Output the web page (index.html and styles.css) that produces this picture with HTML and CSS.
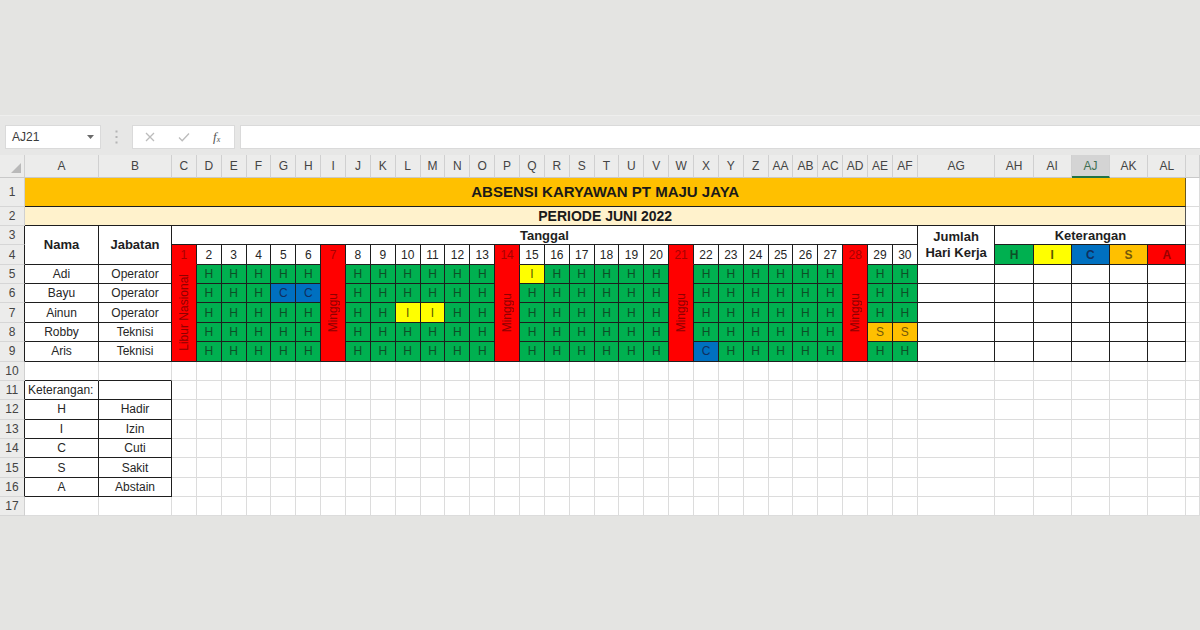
FILE: index.html
```html
<!DOCTYPE html>
<html lang="id">
<head>
<meta charset="utf-8">
<title>Absensi Karyawan PT Maju Jaya</title>
<link rel="stylesheet" href="styles.css">
</head>
<body>
<div class="app">
  <div class="toolbar">
    <div class="namebox"><span>AJ21</span><svg width="7" height="4" viewBox="0 0 7 4"><polygon points="0,0 7,0 3.5,4" fill="#6a6a6a"/></svg></div>
    <div class="grip"><svg width="3" height="14" viewBox="0 0 3 14"><rect x="0.5" y="0.5" width="2" height="2" fill="#b4b4b4"/><rect x="0.5" y="6" width="2" height="2" fill="#b4b4b4"/><rect x="0.5" y="11.5" width="2" height="2" fill="#b4b4b4"/></svg></div>
    <div class="fxbox">
      <span class="ico"><svg width="10" height="10" viewBox="0 0 10 10"><path d="M1 1 L9 9 M9 1 L1 9" stroke="#bcbcbc" stroke-width="1.3" fill="none"/></svg></span>
      <span class="ico"><svg width="12" height="10" viewBox="0 0 12 10"><path d="M1 5.5 L4.2 8.7 L11 1.5" stroke="#bcbcbc" stroke-width="1.3" fill="none"/></svg></span>
      <span class="fx">f<sub>x</sub></span>
    </div>
    <div class="formula"></div>
  </div>

  <div class="s">
    <!-- column headers -->
    <div class="ch corner"><svg width="10" height="10" viewBox="0 0 10 10"><polygon points="10,0 10,10 0,10" fill="#b9b9b9"/></svg></div>
    <div class="ch">A</div><div class="ch">B</div><div class="ch">C</div><div class="ch">D</div><div class="ch">E</div><div class="ch">F</div><div class="ch">G</div><div class="ch">H</div><div class="ch">I</div><div class="ch">J</div><div class="ch">K</div><div class="ch">L</div><div class="ch">M</div><div class="ch">N</div><div class="ch">O</div><div class="ch">P</div><div class="ch">Q</div><div class="ch">R</div><div class="ch">S</div><div class="ch">T</div><div class="ch">U</div><div class="ch">V</div><div class="ch">W</div><div class="ch">X</div><div class="ch">Y</div><div class="ch">Z</div><div class="ch">AA</div><div class="ch">AB</div><div class="ch">AC</div><div class="ch">AD</div><div class="ch">AE</div><div class="ch">AF</div><div class="ch">AG</div><div class="ch">AH</div><div class="ch">AI</div><div class="ch sel">AJ</div><div class="ch">AK</div><div class="ch">AL</div><div class="ch"></div>

    <!-- row 1 -->
    <div class="rh">1</div><div class="t1">ABSENSI KARYAWAN PT MAJU JAYA</div><div></div>
    <!-- row 2 -->
    <div class="rh">2</div><div class="t2">PERIODE JUNI 2022</div><div></div>
    <!-- row 3 -->
    <div class="rh rb">3</div>
    <div class="b r2 hd">Nama</div>
    <div class="b r2 hd">Jabatan</div>
    <div class="b c30 hd">Tanggal</div>
    <div class="b r2 hd two">Jumlah<br>Hari Kerja</div>
    <div class="b c5 hd">Keterangan</div>
    <div></div>
    <!-- row 4 -->
    <div class="rh rb">4</div>
    <div class="b rdd">1</div><div class="b">2</div><div class="b">3</div><div class="b">4</div><div class="b">5</div><div class="b">6</div><div class="b rdd">7</div><div class="b">8</div><div class="b">9</div><div class="b">10</div><div class="b">11</div><div class="b">12</div><div class="b">13</div><div class="b rdd">14</div><div class="b">15</div><div class="b">16</div><div class="b">17</div><div class="b">18</div><div class="b">19</div><div class="b">20</div><div class="b rdd">21</div><div class="b">22</div><div class="b">23</div><div class="b">24</div><div class="b">25</div><div class="b">26</div><div class="b">27</div><div class="b rdd">28</div><div class="b">29</div><div class="b">30</div>
    <div class="b g k">H</div><div class="b y k">I</div><div class="b bl k">C</div><div class="b o k">S</div><div class="b rd k">A</div>
    <div></div>

    <!-- row 5 -->
    <div class="rh rb">5</div><div class="b">Adi</div><div class="b">Operator</div>
    <div class="b mg"><span>Libur Nasional</span></div>
    <div class="b g">H</div><div class="b g">H</div><div class="b g">H</div><div class="b g">H</div><div class="b g">H</div>
    <div class="b mg"><span>Minggu</span></div>
    <div class="b g">H</div><div class="b g">H</div><div class="b g">H</div><div class="b g">H</div><div class="b g">H</div><div class="b g">H</div>
    <div class="b mg"><span>Minggu</span></div>
    <div class="b y">I</div><div class="b g">H</div><div class="b g">H</div><div class="b g">H</div><div class="b g">H</div><div class="b g">H</div>
    <div class="b mg"><span>Minggu</span></div>
    <div class="b g">H</div><div class="b g">H</div><div class="b g">H</div><div class="b g">H</div><div class="b g">H</div><div class="b g">H</div>
    <div class="b mg"><span>Minggu</span></div>
    <div class="b g">H</div><div class="b g">H</div>
    <div class="b"></div><div class="b"></div><div class="b"></div><div class="b"></div><div class="b"></div><div class="b"></div>
    <div></div>

    <!-- row 6 -->
    <div class="rh rb">6</div><div class="b">Bayu</div><div class="b">Operator</div>
    <div class="b g">H</div><div class="b g">H</div><div class="b g">H</div><div class="b bl">C</div><div class="b bl">C</div>
    <div class="b g">H</div><div class="b g">H</div><div class="b g">H</div><div class="b g">H</div><div class="b g">H</div><div class="b g">H</div>
    <div class="b g">H</div><div class="b g">H</div><div class="b g">H</div><div class="b g">H</div><div class="b g">H</div><div class="b g">H</div>
    <div class="b g">H</div><div class="b g">H</div><div class="b g">H</div><div class="b g">H</div><div class="b g">H</div><div class="b g">H</div>
    <div class="b g">H</div><div class="b g">H</div>
    <div class="b"></div><div class="b"></div><div class="b"></div><div class="b"></div><div class="b"></div><div class="b"></div>
    <div></div>

    <!-- row 7 -->
    <div class="rh rb">7</div><div class="b">Ainun</div><div class="b">Operator</div>
    <div class="b g">H</div><div class="b g">H</div><div class="b g">H</div><div class="b g">H</div><div class="b g">H</div>
    <div class="b g">H</div><div class="b g">H</div><div class="b y">I</div><div class="b y">I</div><div class="b g">H</div><div class="b g">H</div>
    <div class="b g">H</div><div class="b g">H</div><div class="b g">H</div><div class="b g">H</div><div class="b g">H</div><div class="b g">H</div>
    <div class="b g">H</div><div class="b g">H</div><div class="b g">H</div><div class="b g">H</div><div class="b g">H</div><div class="b g">H</div>
    <div class="b g">H</div><div class="b g">H</div>
    <div class="b"></div><div class="b"></div><div class="b"></div><div class="b"></div><div class="b"></div><div class="b"></div>
    <div></div>

    <!-- row 8 -->
    <div class="rh rb">8</div><div class="b">Robby</div><div class="b">Teknisi</div>
    <div class="b g">H</div><div class="b g">H</div><div class="b g">H</div><div class="b g">H</div><div class="b g">H</div>
    <div class="b g">H</div><div class="b g">H</div><div class="b g">H</div><div class="b g">H</div><div class="b g">H</div><div class="b g">H</div>
    <div class="b g">H</div><div class="b g">H</div><div class="b g">H</div><div class="b g">H</div><div class="b g">H</div><div class="b g">H</div>
    <div class="b g">H</div><div class="b g">H</div><div class="b g">H</div><div class="b g">H</div><div class="b g">H</div><div class="b g">H</div>
    <div class="b o">S</div><div class="b o">S</div>
    <div class="b"></div><div class="b"></div><div class="b"></div><div class="b"></div><div class="b"></div><div class="b"></div>
    <div></div>

    <!-- row 9 -->
    <div class="rh rb">9</div><div class="b">Aris</div><div class="b">Teknisi</div>
    <div class="b g">H</div><div class="b g">H</div><div class="b g">H</div><div class="b g">H</div><div class="b g">H</div>
    <div class="b g">H</div><div class="b g">H</div><div class="b g">H</div><div class="b g">H</div><div class="b g">H</div><div class="b g">H</div>
    <div class="b g">H</div><div class="b g">H</div><div class="b g">H</div><div class="b g">H</div><div class="b g">H</div><div class="b g">H</div>
    <div class="b bl">C</div><div class="b g">H</div><div class="b g">H</div><div class="b g">H</div><div class="b g">H</div><div class="b g">H</div>
    <div class="b g">H</div><div class="b g">H</div>
    <div class="b"></div><div class="b"></div><div class="b"></div><div class="b"></div><div class="b"></div><div class="b"></div>
    <div></div>

    <!-- row 10 -->
    <div class="rh">10</div><div class="bb"></div><div class="bb"></div>
    <div></div><div></div><div></div><div></div><div></div><div></div><div></div><div></div><div></div><div></div>
    <div></div><div></div><div></div><div></div><div></div><div></div><div></div><div></div><div></div><div></div>
    <div></div><div></div><div></div><div></div><div></div><div></div><div></div><div></div><div></div><div></div>
    <div></div><div></div><div></div><div></div><div></div><div></div><div></div>

    <!-- row 11 -->
    <div class="rh rb">11</div><div class="b l">Keterangan:</div><div class="b"></div>
    <div></div><div></div><div></div><div></div><div></div><div></div><div></div><div></div><div></div><div></div>
    <div></div><div></div><div></div><div></div><div></div><div></div><div></div><div></div><div></div><div></div>
    <div></div><div></div><div></div><div></div><div></div><div></div><div></div><div></div><div></div><div></div>
    <div></div><div></div><div></div><div></div><div></div><div></div><div></div>

    <!-- row 12 -->
    <div class="rh rb">12</div><div class="b">H</div><div class="b">Hadir</div>
    <div></div><div></div><div></div><div></div><div></div><div></div><div></div><div></div><div></div><div></div>
    <div></div><div></div><div></div><div></div><div></div><div></div><div></div><div></div><div></div><div></div>
    <div></div><div></div><div></div><div></div><div></div><div></div><div></div><div></div><div></div><div></div>
    <div></div><div></div><div></div><div></div><div></div><div></div><div></div>

    <!-- row 13 -->
    <div class="rh rb">13</div><div class="b">I</div><div class="b">Izin</div>
    <div></div><div></div><div></div><div></div><div></div><div></div><div></div><div></div><div></div><div></div>
    <div></div><div></div><div></div><div></div><div></div><div></div><div></div><div></div><div></div><div></div>
    <div></div><div></div><div></div><div></div><div></div><div></div><div></div><div></div><div></div><div></div>
    <div></div><div></div><div></div><div></div><div></div><div></div><div></div>

    <!-- row 14 -->
    <div class="rh rb">14</div><div class="b">C</div><div class="b">Cuti</div>
    <div></div><div></div><div></div><div></div><div></div><div></div><div></div><div></div><div></div><div></div>
    <div></div><div></div><div></div><div></div><div></div><div></div><div></div><div></div><div></div><div></div>
    <div></div><div></div><div></div><div></div><div></div><div></div><div></div><div></div><div></div><div></div>
    <div></div><div></div><div></div><div></div><div></div><div></div><div></div>

    <!-- row 15 -->
    <div class="rh rb">15</div><div class="b">S</div><div class="b">Sakit</div>
    <div></div><div></div><div></div><div></div><div></div><div></div><div></div><div></div><div></div><div></div>
    <div></div><div></div><div></div><div></div><div></div><div></div><div></div><div></div><div></div><div></div>
    <div></div><div></div><div></div><div></div><div></div><div></div><div></div><div></div><div></div><div></div>
    <div></div><div></div><div></div><div></div><div></div><div></div><div></div>

    <!-- row 16 -->
    <div class="rh rb">16</div><div class="b">A</div><div class="b">Abstain</div>
    <div></div><div></div><div></div><div></div><div></div><div></div><div></div><div></div><div></div><div></div>
    <div></div><div></div><div></div><div></div><div></div><div></div><div></div><div></div><div></div><div></div>
    <div></div><div></div><div></div><div></div><div></div><div></div><div></div><div></div><div></div><div></div>
    <div></div><div></div><div></div><div></div><div></div><div></div><div></div>

    <!-- row 17 -->
    <div class="rh">17</div><div></div><div></div>
    <div></div><div></div><div></div><div></div><div></div><div></div><div></div><div></div><div></div><div></div>
    <div></div><div></div><div></div><div></div><div></div><div></div><div></div><div></div><div></div><div></div>
    <div></div><div></div><div></div><div></div><div></div><div></div><div></div><div></div><div></div><div></div>
    <div></div><div></div><div></div><div></div><div></div><div></div><div></div>
  </div>
</div>
</body>
</html>
```

FILE: styles.css
```css
* { box-sizing: border-box; margin: 0; padding: 0; }
html, body { width: 1200px; height: 630px; overflow: hidden; }
body {
  background: #e4e4e2;
  font-family: "Liberation Sans", Arial, sans-serif;
  color: #222;
}
.app { padding-top: 115px; }

/* formula bar */
.toolbar {
  height: 40px;
  display: flex;
  align-items: flex-start;
  padding: 9px 0 0 5px;
  background: #e7e7e6;
  border-top: 1px solid #eeeeed;
}
.namebox {
  width: 96px; height: 24px;
  background: #fff;
  border: 1px solid #dadada;
  display: flex; align-items: center; justify-content: space-between;
  padding: 0 6px 0 6px;
  font-size: 12px; color: #3a3a3a;
}
.grip { width: 31px; height: 24px; display: flex; align-items: center; justify-content: center; }
.fxbox {
  width: 103px; height: 24px;
  background: #fff;
  border: 1px solid #dadada;
  display: flex; align-items: center;
  padding-left: 12px;
}
.ico { width: 33px; display: flex; align-items: center; }
.fx {
  font-family: "Liberation Serif", serif;
  font-style: italic;
  font-size: 13px;
  color: #555;
  margin-left: 2px;
}
.fx sub { font-size: 8px; vertical-align: -1px; }
.formula {
  flex: 1; height: 24px;
  margin-left: 5px;
  background: #fff;
  border: 1px solid #dadada;
  border-right: 0;
}

/* sheet grid */
.s {
  display: grid;
  grid-template-columns: 25px 74px 73px repeat(30, 24.867px) 77.7px repeat(5, 38.2px) 1fr;
  grid-template-rows: 23px 28.7px repeat(16, 19.37px);
  background: #fff;
}
.s > div {
  border-right: 1px solid #dcdcdc;
  border-bottom: 1px solid #dcdcdc;
  display: flex; align-items: center; justify-content: center;
  font-size: 12px;
  white-space: nowrap;
  overflow: hidden;
  min-width: 0;
  color: #262626;
}
.s .ch {
  background: #ececeb;
  color: #444;
  border-right-color: #d0d0d0;
  border-bottom-color: #c9c9c9;
}
.s .corner { justify-content: flex-end; align-items: flex-end; padding: 0 3px 4px 0; }
.s .sel {
  background: #d4d4d4;
  color: #3f6f52;
  border-bottom: 2px solid #217346;
}
.s .rh {
  grid-column: 1;
  background: #ececeb;
  color: #444;
  border-right-color: #d0d0d0;
  border-bottom-color: #d6d6d6;
}
.s .rb { border-right-color: #1e1e1e; }

.s .t1 {
  grid-column: span 38;
  background: #ffc000;
  font-weight: bold; font-size: 15px; color: #1a1a1a;
  border-bottom-color: #1e1e1e;
  border-right-color: #6b5a20;
}
.s .t2 {
  grid-column: span 38;
  background: #fff2cc;
  font-weight: bold; font-size: 14px; color: #1a1a1a;
  border-bottom-color: #1e1e1e;
  border-right-color: #555;
}

.s .b { border-right-color: #1e1e1e; border-bottom-color: #1e1e1e; }
.s .bb { border-bottom-color: #1e1e1e; }
.s .r2 { grid-row: span 2; }
.s .c30 { grid-column: span 30; }
.s .c5 { grid-column: span 5; }
.s .hd { font-weight: bold; font-size: 13px; color: #1e1e1e; }
.s .two { white-space: normal; text-align: center; line-height: 1.22; }
.s .k { font-weight: bold; }
.s .l { justify-content: flex-start; padding-left: 3px; }

.s .g { background: #00b050; color: #0d4f27; }
.s .y { background: #ffff00; color: #5a5a00; }
.s .bl { background: #0070c0; color: #102f5e; }
.s .o { background: #ffc000; color: #75580a; }
.s .rd { background: #ff0000; color: #9a0000; }
.s .rdd { background: #ff0000; color: #a80000; border-bottom-color: #ff0000; }
.s .mg {
  grid-row: span 5;
  background: #ff0000;
  color: #8e0000;
  overflow: visible;
}
.s .mg span {
  writing-mode: vertical-rl;
  transform: rotate(180deg);
  font-size: 12px;
  line-height: 1;
}
```
